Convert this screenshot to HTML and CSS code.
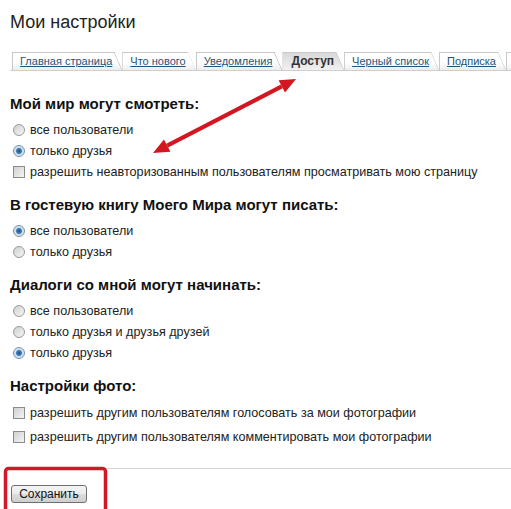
FILE: index.html
```html
<!DOCTYPE html>
<html>
<head>
    <title>Мои настройки</title>
    <link rel="stylesheet" href="styles.css">
</head>
<body>
    <div class="page">
        <h1 class="title">Мои настройки</h1>

        <ul class="tabs">
            <li class="tab"><a href="#">Главная страница</a></li>
            <li class="tab"><a href="#">Что нового</a></li>
            <li class="tab"><a href="#">Уведомления</a></li>
            <li class="tab active"><span>Доступ</span></li>
            <li class="tab"><a href="#">Черный список</a></li>
            <li class="tab"><a href="#">Подписка</a></li>
            <li class="tab more"></li>
        </ul>

        <div class="section">
            <h2>Мой мир могут смотреть:</h2>
            <div class="option"><span class="radio"></span>все пользователи</div>
            <div class="option"><span class="radio checked"></span>только друзья</div>
            <div class="option"><span class="checkbox"></span>разрешить неавторизованным пользователям просматривать мою страницу</div>
        </div>

        <div class="section">
            <h2>В гостевую книгу Моего Мира могут писать:</h2>
            <div class="option"><span class="radio checked"></span>все пользователи</div>
            <div class="option"><span class="radio"></span>только друзья</div>
        </div>

        <div class="section">
            <h2>Диалоги со мной могут начинать:</h2>
            <div class="option"><span class="radio"></span>все пользователи</div>
            <div class="option"><span class="radio"></span>только друзья и друзья друзей</div>
            <div class="option"><span class="radio checked"></span>только друзья</div>
        </div>

        <div class="section">
            <h2>Настройки фото:</h2>
            <div class="option tall"><span class="checkbox"></span>разрешить другим пользователям голосовать за мои фотографии</div>
            <div class="option tall"><span class="checkbox"></span>разрешить другим пользователям комментировать мои фотографии</div>
        </div>

        <div class="actions">
            <button class="save">Сохранить</button>
        </div>

        <!-- annotation marks drawn over the page -->
        <svg class="marks" width="511" height="509" viewBox="0 0 511 509">
            <line x1="167.2" y1="145.6" x2="281.8" y2="86.4" stroke="#d3161f" stroke-width="4"/>
            <polygon points="153,153 170.4,151.8 164,139.4" fill="#d3161f"/>
            <polygon points="296,79 285,92.6 278.6,80.2" fill="#d3161f"/>
            <rect x="5.5" y="468.5" width="100" height="60" rx="3" fill="none" stroke="#d3162a" stroke-width="3.5"/>
        </svg>
    </div>
</body>
</html>
```

FILE: styles.css
```css
body {
    margin: 0;
    background: white;
    font-family: "Liberation Sans", Arial, sans-serif;
    color: #1e1e1e;
    overflow: hidden;
}
.page {
    position: relative;
    height: 509px;
    padding-left: 10px;
}
.title {
    margin: 0 0 18px;
    padding-top: 10px;
    font-size: 18px;
    font-weight: normal;
    line-height: 24px;
    color: #222;
}
.tabs {
    display: flex;
    margin: 0;
    padding: 0 0 0 2px;
    list-style: none;
    border-bottom: 1px solid #cfcfcf;
    overflow: hidden;
}
.tab {
    position: relative;
    flex: none;
    height: 17px;
    padding: 0 10px 0 7px;
    border-top: 1px solid #c8c8c8;
    border-left: 1px solid #c8c8c8;
    background: linear-gradient(#ffffff 55%, #ededed);
    font-size: 11px;
    line-height: 17px;
    clip-path: polygon(0 0, calc(100% - 8px) 0, 100% 100%, 0 100%);
}
.tab::after {
    content: "";
    position: absolute;
    top: -1px;
    right: 0;
    width: 8px;
    height: 18px;
    background: linear-gradient(to top right, transparent calc(50% - 0.8px), #bdbdbd 50%, transparent calc(50% + 0.8px));
}
.tab a {
    color: #245478;
    text-decoration: underline;
}
.tab.active {
    padding-left: 8px;
    background: linear-gradient(#d9d9d9, #e9e9e9 70%, #f1f1f1);
    font-size: 12px;
    font-weight: bold;
    color: #333;
}
.tab.more {
    width: 40px;
}
.section {
    margin-top: 13px;
}
.tabs + .section {
    margin-top: 23px;
}
.section h2 {
    margin: 0 0 5px;
    font-size: 15px;
    line-height: 20px;
    color: #111;
}
.option {
    display: flex;
    align-items: center;
    gap: 5px;
    height: 21px;
    padding-left: 3px;
    font-size: 12.6px;
    color: #222;
}
.option.tall {
    height: 24px;
}
.radio,
.checkbox {
    flex: none;
    width: 12px;
    height: 12px;
    box-sizing: border-box;
    border: 1px solid #9a9a9a;
    background: linear-gradient(135deg, #cfcfcf, #f6f6f6);
}
.radio {
    border-radius: 50%;
}
.radio.checked {
    background: radial-gradient(circle, #1d5a8f 0, #3a7fb8 2.5px, #c9dced 3.5px, #e8eef3 6px);
    border-color: #7990a6;
}
.checkbox {
    border-color: #8c8c8c;
    background: linear-gradient(135deg, #d0d0d0, #f4f4f4);
}
.actions {
    margin-top: 19px;
    padding-top: 15px;
    border-top: 1px solid #d4d4d4;
}
.save {
    width: 76px;
    height: 18px;
    margin-left: 1px;
    padding: 0;
    border: 1px solid #707070;
    border-radius: 3px;
    background: linear-gradient(#f4f4f4, #ebebeb 50%, #dddddd 51%, #cfcfcf);
    font-family: "Liberation Sans", Arial, sans-serif;
    font-size: 12px;
    color: #111;
}
.marks {
    position: absolute;
    top: 0;
    left: 0;
}
```
